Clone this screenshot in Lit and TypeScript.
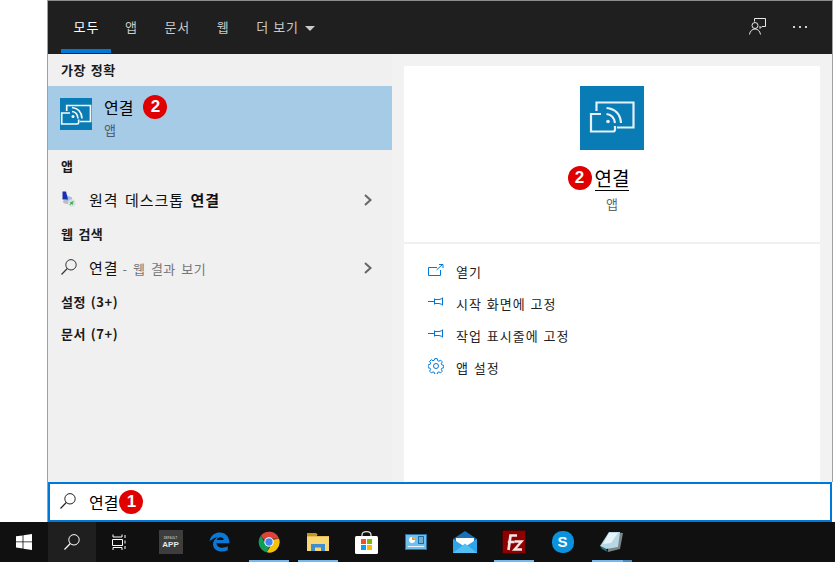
import { LitElement, html, css } from "lit";
import { customElement } from "lit/decorators.js";

const castLarge = html`<svg width="64" height="64" viewBox="0 0 64 64">
  <rect width="64" height="64" fill="#0a7cb5"/>
  <g fill="none" stroke="#e4f1f8" stroke-width="2.200">
    <path d="M16.500 25V16.500H53.500V41.500H37"/>
    <path d="M21 28H11V45.500H33Q35 45.500 35 43.500V40"/>
    <path d="M26.500 22Q40 23.500 41 37M26.500 28Q34 29 35 37"/>
  </g>
  <circle cx="28" cy="35.500" r="1.800" fill="#e4f1f8"/>
</svg>`;

const castSmall = html`<svg width="32" height="32" viewBox="0 0 32 32">
  <rect width="32" height="32" fill="#0a7cb5"/>
  <g fill="none" stroke="#f4f9fc" stroke-width="1.700">
    <path d="M6.700 13V7.500H30.500V23.500H20"/>
    <path d="M10 15H1.700V26H17Q18.700 26 18.700 24.500V21.500"/>
    <path d="M12 9.500Q21.500 10.500 22 20.500M12 13.500Q17.500 14 18 20.500"/>
  </g>
  <circle cx="13" cy="18.500" r="1.500" fill="#f4f9fc"/>
</svg>`;

const searchIcon = (color: string) => html`<svg width="16" height="16" viewBox="0 0 16 16" fill="none" stroke=${color}>
  <circle cx="10" cy="5.800" r="5.200" stroke-width="1"/>
  <path d="M6.300 9.500L0.500 15.500" stroke-width="1.100"/>
</svg>`;

const chevron = html`<svg width="10" height="14" viewBox="0 0 10 14" fill="none" stroke="#666" stroke-width="2"><path d="M2 2L7.500 7L2 12"/></svg>`;

const pin = html`<svg width="16" height="12" viewBox="0 0 16 12" fill="none" stroke="#0078d7" stroke-width="1"><path d="M0 5.500H6.500M6.500 2.500V8.500M6.500 3.500H11L14.500 2.500M6.500 7.500H11L14.500 8.500M14.500 1.500V9.500"/></svg>`;

const openIcon = html`<svg width="16" height="12" viewBox="0 0 16 12" fill="none" stroke="#0078d7" stroke-width="1"><path d="M9 3.500H.5V11.500H12.500V6M8.500 6L14.500 .5M11 .5H15V4"/></svg>`;

const gear = html`<svg width="16" height="16" viewBox="0 0 16 16" fill="none" stroke="#0078d7" stroke-width="1">
  <circle cx="8" cy="8" r="2.500"/>
  <path d="M6.800.6h2.400l.4 2 1.300.6 1.800-1 1.600 1.700-1 1.700.5 1.300 2 .5v2.300l-2 .5-.5 1.300 1 1.700-1.700 1.700-1.700-1-1.300.5-.5 2H6.800l-.5-2-1.300-.5-1.700 1-1.700-1.700 1-1.700-.5-1.300-2-.5V6.900l2-.5.5-1.300-1-1.700 1.700-1.700 1.700 1 1.300-.6z"/>
</svg>`;

const rdp = html`<svg width="16" height="16" viewBox="0 0 16 16">
  <ellipse cx="7" cy="10.500" rx="5" ry="2.500" fill="#b9bec4"/>
  <path fill="#9cc0e6" d="M5 4L11 6.500V11H6Z"/>
  <path fill="#1a2fb0" d="M1.500 .5H5L7 8.500H1.500Z"/>
  <circle cx="10.700" cy="12" r="3.800" fill="#dcdfe2"/>
  <path d="M9 13.700L12.400 10.300M9.500 10.800L12 13.300" stroke="#2fa84a" stroke-width="1.100"/>
</svg>`;

const winLogo = html`<svg width="16" height="16" viewBox="0 0 16 16" fill="#fff"><path d="M0 2.300L6.600 1.400V7.500H0ZM7.400 1.300L16 0V7.500H7.400ZM0 8.300H6.600V14.500L0 13.600ZM7.400 8.300H16V16L7.400 14.700Z"/></svg>`;

const taskView = html`<svg width="16" height="16" viewBox="0 0 16 16" fill="none" stroke="#fff" stroke-width="1"><path d="M1 .5V3H10V.5M.5 5.500H10.500V11.500H.5ZM1 16V13.500H10V16M13 1V4M13 6.500V9.500M13 12V15"/></svg>`;

const edge = html`<svg width="21" height="20" viewBox="0 0 24 23"><path fill="#0a78d4" d="M.5 10.500C2 3.500 7 .5 12.500.5 19 .5 23.500 5.500 23.500 13H8.500C8.800 17.500 14.500 20 21.500 16.500V21C14 24.500 5 22 4.500 14.500 4.300 10.500 7 7.500 10 6 6 6.500 3 8.500.5 10.500ZM8.800 9.300H16.800C16.800 5 9.800 5 8.800 9.300Z"/></svg>`;

const chrome = html`<svg width="22" height="22" viewBox="0 0 24 24">
  <path fill="#db4437" d="M3 5.300A11.500 11.500 0 0 1 23 8.500H12A4 4 0 0 0 8 11.500Z"/>
  <path fill="#0f9d58" d="M3 5.300L8.400 13.800A4 4 0 0 0 13 15.900L9.500 23.300A11.500 11.500 0 0 1 3 5.300Z"/>
  <path fill="#f4c20d" d="M23 8.500A11.500 11.500 0 0 1 9.500 23.300L14.700 14.800A4 4 0 0 0 15 9.500Z"/>
  <circle cx="12" cy="12" r="5.200" fill="#fff"/><circle cx="12" cy="12" r="4" fill="#4285f4"/>
</svg>`;

const explorer = html`<svg width="22" height="18" viewBox="0 0 22 18">
  <path fill="#c8961c" d="M0 0H9L11 2H10V6H0Z"/>
  <path fill="#f8d775" d="M0 3H22V18H0Z"/>
  <path fill="#e8bd55" d="M0 3H22V4H0Z"/>
  <path fill="#3f8fd0" d="M4 11H18V18H14V14.500H8V18H4Z"/>
</svg>`;

const store = html`<svg width="23" height="23" viewBox="0 0 23 23">
  <path fill="none" stroke="#ddd" stroke-width="1.300" d="M7 6V4Q7 .7 11.500 .7T16 4V6"/>
  <rect y="5" width="23" height="18" rx="1.500" fill="#fff"/>
  <rect x="6" y="8" width="5" height="5" fill="#f25022"/><rect x="12" y="8" width="5" height="5" fill="#7fba00"/>
  <rect x="6" y="14" width="5" height="5" fill="#00a4ef"/><rect x="12" y="14" width="5" height="5" fill="#ffb900"/>
</svg>`;

const panelApp = html`<svg width="22" height="16" viewBox="0 0 22 16">
  <rect width="22" height="16" fill="#2f6f9c"/><rect x="1" y="1" width="20" height="14" fill="#6fc0ef"/>
  <circle cx="7" cy="6" r="3" fill="#fff"/><path d="M7 6V3A3 3 0 0 1 10 6Z" fill="#f09b2c"/>
  <path d="M13 2H19V10H13Z" fill="#1b6fa8"/><path d="M14 4H18M14 6H18M14 8H18" stroke="#cfe9f9"/>
  <path d="M3 12.500H19" stroke="#e6f4fc"/>
</svg>`;

const mail = html`<svg width="24" height="22" viewBox="0 0 24 22">
  <path fill="#1a6fb5" d="M0 8L12 0 24 8V9L12 16 0 9Z"/>
  <path fill="#fff" d="M3 7H21V11L12 16 3 11Z"/>
  <path fill="#2ea5e8" d="M0 8L12 16 24 8V22H0Z"/>
  <path fill="#53c0f4" d="M0 22L12 12.500 24 22Z"/>
</svg>`;

const filezilla = html`<svg width="24" height="24" viewBox="0 0 24 24">
  <rect x=".5" y=".5" width="23" height="23" fill="#8f0000" stroke="#3d0000" stroke-dasharray="1.500 1"/>
  <path fill="none" stroke="#f3e6e6" stroke-width="2.700" d="M6.500 20L8.500 5.500H15M5.800 12H12.500"/>
  <path fill="none" stroke="#f3e6e6" stroke-width="2.400" d="M12.500 11.500H19.500L12.500 19.500H20"/>
</svg>`;

const notepad = html`<svg width="23" height="22" viewBox="0 0 23 22">
  <path fill="#7c8586" d="M9 1L23 2 20 18 8 21Z"/>
  <path fill="#b5d8e4" d="M0 15L9 1 20 1 18 16 6 18Z"/>
  <path fill="#2f6f78" d="M0 15L6 18 8 21 2 18Z"/>
  <path fill="#e6f3f7" d="M9 2L18 2 11 12 3 13Z"/>
</svg>`;

const feedback = html`<svg width="17" height="17" viewBox="0 0 17 17" fill="none" stroke="#e8e8e8" stroke-width="1">
  <path d="M5.500 3.500V.5H16.500V8.500H13L11 10.500V8"/>
  <circle cx="6" cy="7.500" r="3"/>
  <path d="M.5 16.500C1 12.800 3.500 11 6 11S11 12.800 11.500 16.500"/>
</svg>`;

@customElement("app-root")
export class AppRoot extends LitElement {
  static styles = css`
    :host {
      display: block;
      width: 835px;
      height: 562px;
      background: #fff;
      font-family: "Noto Sans CJK KR", "Liberation Sans", sans-serif;
      overflow: hidden;
    }
    svg { display: block; flex: none; }
    .page { display: flex; flex-direction: column; height: 562px; }
    .window {
      flex: 1;
      min-height: 0;
      margin-left: 47px;
      width: 786px;
      box-sizing: border-box;
      border-left: 1px solid #a0a0a0;
      display: flex;
      flex-direction: column;
    }
    .main {
      flex: 1;
      min-height: 0;
      display: flex;
      flex-direction: column;
      background: #f2f2f2;
      border-top: 1px solid #8c8c8c;
      border-right: 1px solid #a0a0a0;
    }
    .topbar {
      height: 53px;
      flex: none;
      background: #1f1f1f;
      display: flex;
      gap: 1.500px;
      color: #c9c9c9;
      font-size: 13px;
      letter-spacing: 1px;
      padding-left: 13px;
    }
    .tab {
      display: flex;
      align-items: center;
      justify-content: center;
      height: 52px;
      box-sizing: border-box;
      padding: 3px 12.500px 0;
      border-bottom: 4px solid transparent;
    }
    .tab.on { color: #fff; border-bottom-color: #0078d7; padding-right: 11.500px; }
    .caret { width: 0; height: 0; border-left: 5px solid transparent; border-right: 5px solid transparent; border-top: 5px solid #c9c9c9; margin: 3px 0 0 6px; }
    .spacer { flex: 1; }
    .tool { display: flex; align-items: center; justify-content: center; height: 53px; box-sizing: border-box; padding-bottom: 2px; }
    .t-fb { margin-right: 25.500px; }
    .dots { gap: 4px; margin-right: 25px; }
    .dots i { width: 2px; height: 2px; background: #d0d0d0; }
    .body { flex: 1; min-height: 0; display: flex; }
    .left { width: 344px; background: #f0f0f0; flex: none; display: flex; flex-direction: column; }
    .head {
      font-size: 13px;
      font-weight: 700;
      letter-spacing: .5px;
      word-spacing: 1.500px;
      color: #1a1a1a;
      padding: 0 0 1px 13px;
      height: 32px;
      display: flex;
      align-items: center;
      box-sizing: border-box;
    }
    .best { height: 64px; background: #a6cbe7; display: flex; padding: 12px 0 0 12px; box-sizing: border-box; gap: 12px; }
    .best-text { display: flex; flex-direction: column; margin-top: -3px; }
    .best-name { display: flex; align-items: center; font-size: 16px; line-height: 24px; color: #000; gap: 10px; }
    .best-sub { font-size: 13px; color: #4f5b66; line-height: 20px; margin-top: 1px; }
    .badge {
      width: 24px;
      height: 24px;
      border-radius: 50%;
      background: #e00000;
      color: #fff;
      font: 700 17px/24px "Liberation Sans", sans-serif;
      text-align: center;
      flex: none;
    }
    .row {
      height: 36px;
      display: flex;
      align-items: center;
      padding: 0 19px 0 13px;
      font-size: 15px;
      letter-spacing: 1px;
      word-spacing: 2px;
      color: #111;
    }
    .ric { width: 28px; flex: none; display: flex; margin-top: -2px; }
    .grow { flex: 1; display: flex; align-items: baseline; white-space: pre; margin-top: -2px; }
    .muted { font-size: 13px; letter-spacing: .5px; word-spacing: 2px; color: #777; margin-left: 4px; }
    .right-wrap { flex: 1; padding: 12px 12px 0; display: flex; min-width: 0; }
    .right { flex: 1; background: #fff; display: flex; flex-direction: column; }
    .hero {
      height: 178px;
      flex: none;
      border-bottom: 2px solid #f0f0f0;
      display: flex;
      flex-direction: column;
      align-items: center;
      box-sizing: border-box;
      padding-top: 20px;
    }
    .hero-title { position: relative; margin-top: 15px; font-size: 19px; line-height: 25px; color: #000; border-bottom: 1px solid #000; }
    .hero-title .badge { position: absolute; right: calc(100% + 3px); top: 1px; }
    .hero-sub { font-size: 13px; color: #666; line-height: 20px; margin-top: 3px; }
    .actions { padding: 11px 0 0 24px; display: flex; flex-direction: column; }
    .act { height: 32px; display: flex; align-items: center; font-size: 13px; letter-spacing: 1px; word-spacing: 1px; color: #222; }
    .aic { width: 28px; flex: none; display: flex; margin-top: -3px; }
    .search-box {
      flex: none;
      height: 40px;
      margin-right: 1px;
      box-sizing: border-box;
      border: 2px solid #0078d7;
      background: #fff;
      display: flex;
      align-items: center;
      padding-left: 10px;
      font-size: 16px;
      color: #000;
    }
    .sic { margin-right: 13px; margin-top: -2px; }
    .search-box .badge { margin-left: 1px; }
    .taskbar { height: 40px; flex: none; background: #101010; display: flex; }
    .cell { width: 48px; height: 40px; flex: none; display: flex; align-items: center; justify-content: center; position: relative; box-sizing: border-box; }
    .cell.app { width: 49px; }
    .cell.first { margin-left: 2px; }
    .cell.active { background: #1f1f1f; }
    .cell.run::after { content: ""; position: absolute; left: 5px; right: 4px; bottom: 0; height: 2px; background: #76b9ed; }
    .cell.multi::after { background: linear-gradient(90deg, #76b9ed 31px, #4c8dbf 31px); }
    .defapp { width: 24px; height: 24px; background: #3d3d3d; color: #e8e8e8; display: flex; flex-direction: column; align-items: center; font-family: "Liberation Sans", sans-serif; font-weight: 700; box-sizing: border-box; padding-top: 6px; }
    .d1 { font-size: 3px; line-height: 4px; color: #aaa; }
    .d2 { font-size: 8px; line-height: 9px; }
    .skype { width: 22px; height: 22px; border-radius: 45%; background: #0a92dc; color: #fff; font: 700 15px/22px "Liberation Sans", sans-serif; text-align: center; }
  `;

  render() {
    return html`<div class="page">
      <div class="window">
        <div class="main">
          <div class="topbar">
            <div class="tab on">모두</div>
            <div class="tab">앱</div>
            <div class="tab">문서</div>
            <div class="tab">웹</div>
            <div class="tab">더 보기<span class="caret"></span></div>
            <div class="spacer"></div>
            <div class="tool t-fb">${feedback}</div>
            <div class="tool dots"><i></i><i></i><i></i></div>
          </div>
          <div class="body">
            <div class="left">
              <div class="head">가장 정확</div>
              <div class="best">
                ${castSmall}
                <div class="best-text">
                  <div class="best-name">연결<span class="badge">2</span></div>
                  <div class="best-sub">앱</div>
                </div>
              </div>
              <div class="head">앱</div>
              <div class="row"><span class="ric">${rdp}</span><span class="grow">원격 데스크톱 <b>연결</b></span>${chevron}</div>
              <div class="head">웹 검색</div>
              <div class="row"><span class="ric">${searchIcon("#333")}</span><span class="grow">연결<span class="muted">- 웹 결과 보기</span></span>${chevron}</div>
              <div class="head">설정 (3+)</div>
              <div class="head">문서 (7+)</div>
            </div>
            <div class="right-wrap">
              <div class="right">
                <div class="hero">
                  ${castLarge}
                  <div class="hero-title"><span class="badge">2</span>연결</div>
                  <div class="hero-sub">앱</div>
                </div>
                <div class="actions">
                  <div class="act"><span class="aic">${openIcon}</span>열기</div>
                  <div class="act"><span class="aic">${pin}</span>시작 화면에 고정</div>
                  <div class="act"><span class="aic">${pin}</span>작업 표시줄에 고정</div>
                  <div class="act"><span class="aic">${gear}</span>앱 설정</div>
                </div>
              </div>
            </div>
          </div>
        </div>
        <div class="search-box">
          <span class="sic">${searchIcon("#222")}</span>연결<span class="badge">1</span>
        </div>
      </div>
      <div class="taskbar">
        <div class="cell">${winLogo}</div>
        <div class="cell active">${searchIcon("#fff")}</div>
        <div class="cell">${taskView}</div>
        <div class="cell app first"><div class="defapp"><span class="d1">DEFAULT</span><span class="d2">APP</span></div></div>
        <div class="cell app">${edge}</div>
        <div class="cell app run">${chrome}</div>
        <div class="cell app run">${explorer}</div>
        <div class="cell app">${store}</div>
        <div class="cell app">${panelApp}</div>
        <div class="cell app">${mail}</div>
        <div class="cell app run">${filezilla}</div>
        <div class="cell app"><div class="skype">S</div></div>
        <div class="cell app run multi">${notepad}</div>
      </div>
    </div>`;
  }
}
